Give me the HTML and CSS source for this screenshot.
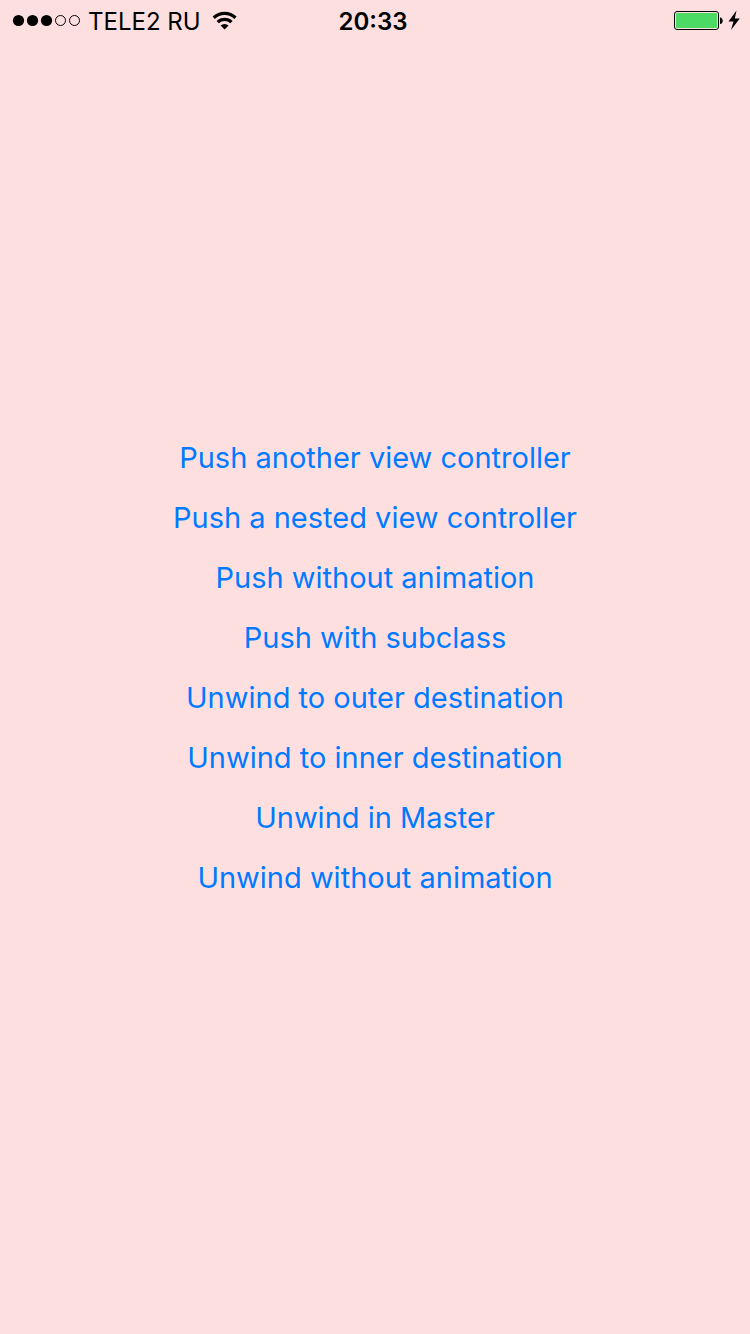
FILE: index.html
```html
<!DOCTYPE html>
<html lang="en">
<head>
<meta charset="utf-8">
<meta name="viewport" content="width=device-width, initial-scale=1">
<title>Navigation</title>
<link rel="stylesheet" href="styles.css">
</head>
<body>
<header class="status">
  <div class="status-left">
    <svg class="signal" width="68" height="12" viewBox="0 0 68 12" aria-hidden="true">
      <circle cx="6.5" cy="5.5" r="5.6"/><circle cx="20.5" cy="5.5" r="5.6"/><circle cx="34.5" cy="5.5" r="5.6"/>
      <circle class="hollow" cx="48.5" cy="5.5" r="5"/><circle class="hollow" cx="62.5" cy="5.5" r="5"/>
    </svg>
    <span class="carrier">TELE2 RU</span>
    <svg class="wifi" width="24" height="18" viewBox="0 0 24 18" aria-hidden="true">
      <path d="M-.4 4.6a17.6 17.6 0 0 1 24 0l-2.2 2.3a14.4 14.4 0 0 0-19.6 0z"/>
      <path d="M3.6 9a11.5 11.5 0 0 1 16 0l-2.3 2.3a8.3 8.3 0 0 0-11.4 0z"/>
      <path d="M11.6 17.4l-4-3.8a5.6 5.6 0 0 1 8 0z"/>
    </svg>
  </div>
  <time class="clock">20:33</time>
  <div class="status-right">
    <svg width="66" height="20" viewBox="0 0 66 20" aria-hidden="true">
      <rect class="shell" x=".5" y=".5" width="44" height="18" rx="2.5"/>
      <rect class="charge" x="2" y="2" width="41" height="15" rx="1"/>
      <path d="M46 6.5c3.6 0 3.6 6.5 0 6.5z"/>
      <path d="M62.5-.5l-8 11h5l-2.500 8.500 8.800-11.500h-5z"/>
    </svg>
  </div>
</header>
<main class="actions">
  <button type="button">Push another view controller</button>
  <button type="button">Push a nested view controller</button>
  <button type="button">Push without animation</button>
  <button type="button">Push with subclass</button>
  <button type="button">Unwind to outer destination</button>
  <button type="button">Unwind to inner destination</button>
  <button type="button">Unwind in Master</button>
  <button type="button">Unwind without animation</button>
</main>
</body>
</html>
```
FILE: styles.css
```css
body {
  margin: 0;
  min-height: 100vh;
  display: flex;
  flex-direction: column;
  background: #fddfe0;
  color: #000;
  font-family: Inter, sans-serif;
}
.status {
  display: grid;
  grid-template-columns: 1fr auto 1fr;
  align-items: center;
  height: 42px;
  padding: 0 10px 0 6px;
  font-size: 24px;
}
.status-left { display: flex; align-items: center; gap: 8px; padding-left: 6px; }
.status-right { display: flex; justify-content: flex-end; }
.wifi { margin-left: 4px; }
.clock { font-weight: 600; }
.hollow { fill: none; stroke: #000; }
.shell { fill: none; stroke: #000; }
.charge { fill: #4cd964; }
.actions {
  flex: 1;
  display: flex;
  flex-direction: column;
  align-items: center;
  justify-content: center;
  padding-bottom: 40px;
}
.actions button {
  padding: 0;
  border: 0;
  background: none;
  color: #007aff;
  font: inherit;
  font-size: 29px;
  line-height: 60px;
  cursor: pointer;
}
svg { overflow: visible; }
```
